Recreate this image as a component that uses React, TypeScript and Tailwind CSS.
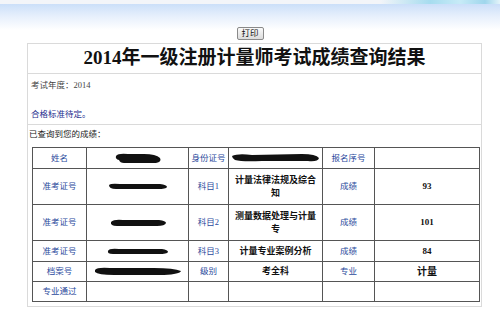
import React from "react";

type Blob = { w: number; h: number; d: string };

// 성적표의 가려진 칸 (검은 낙서)
const Redact = ({ w, h, d }: Blob) => (
  <svg width={w} height={h} viewBox={`0 0 ${w} ${h}`} className="mx-auto block">
    <path d={d} fill="#111" />
  </svg>
);

const blobs: Record<string, Blob> = {
  name: { w: 48, h: 11, d: "M2 3 Q4 0 14 1 L30 1 Q42 1 46 5 Q48 9 42 10 L10 10 Q6 10 5 7 Q1 6 2 3 Z" },
  id: { w: 88, h: 10, d: "M0 3 Q6 0 20 2 L70 1 Q84 1 87 5 Q86 9 76 8 L30 8 Q10 9 3 7 Q0 5 0 3 Z" },
  z1: { w: 60, h: 7, d: "M1 2 Q3 0 12 1 L52 1 Q59 2 59 4 Q58 6 50 6 L8 6 Q1 6 1 2 Z" },
  z2: { w: 58, h: 8, d: "M2 3 Q5 0 14 1 L50 1 Q57 2 57 4 Q56 7 48 7 L8 7 Q1 7 2 3 Z" },
  z3: { w: 62, h: 7, d: "M1 3 Q2 0 12 1 L55 1 Q61 2 61 4 Q60 6 52 6 L6 6 Q0 6 1 3 Z" },
  file: { w: 88, h: 9, d: "M1 3 Q3 0 16 1 L60 1 Q80 1 87 4 Q86 7 70 8 L20 8 Q4 8 1 5 Z" },
};

const Label = ({ children }: { children?: React.ReactNode }) => (
  <td className="border border-[#555] text-center align-middle text-[8.5px] text-[#2b4a9c]">{children}</td>
);

const Value = ({ children, big }: { children?: React.ReactNode; big?: boolean }) => (
  <td
    className={`border border-[#555] px-[3px] text-center align-middle font-bold text-[#111] ${
      big ? "text-[10px] leading-[13px]" : "text-[9px] leading-[13px]"
    }`}
  >
    {children}
  </td>
);

export default function App() {
  return (
    <div className="h-[310px] w-[500px] overflow-hidden bg-white font-['Liberation_Serif','Noto_Sans_CJK_SC',serif]">
      <div className="h-[4px] bg-[linear-gradient(to_right,#f3f5f9_0%,#f3f5f9_76%,#a6dcef_86%,#c7ebf7_92%,#9fd6ec_97%,#e4f4fa_100%)]" />
      <div className="bg-[linear-gradient(to_bottom,#cbdff9_0px,#e6effc_12px,#ffffff_26px)] pt-[23px]">
        <div className="flex justify-center">
          <button className="h-[13px] w-[27px] rounded-[2px] border border-[#8a8a8a] bg-[linear-gradient(to_bottom,#fafafa,#dcdcdc)] text-[8.5px] leading-[11px] text-[#111]">
            打印
          </button>
        </div>

        <div className="ml-[27px] mt-[3px] w-[455px] border border-[#dadada] bg-white pb-[4px]">
          <div className="flex h-[30px] items-center justify-center border-b border-[#dadada] text-[19px] font-bold text-[#111]">
            2014年一级注册计量师考试成绩查询结果
          </div>

          <div className="border-b border-[#dadada] pb-[4px] pl-[3px] pt-[5px] text-[8.5px] leading-[12px]">
            <div className="text-[#444]">考试年度：2014</div>
            <div className="mt-[17px] text-[#1f2f8f]">合格标准待定。</div>
          </div>

          <div className="pl-[1px] pt-[3px] text-[8.5px] leading-[12px] text-[#222]">已查询到您的成绩：</div>

          <table className="ml-[4px] mt-[7px] w-[447px] table-fixed border-collapse">
            <colgroup>
              <col className="w-[54px]" />
              <col className="w-[102px]" />
              <col className="w-[40px]" />
              <col className="w-[94px]" />
              <col className="w-[52px]" />
              <col className="w-[105px]" />
            </colgroup>
            <tbody>
              <tr className="h-[21px]">
                <Label>姓名</Label>
                <td className="border border-[#555]">
                  <Redact {...blobs.name} />
                </td>
                <Label>身份证号</Label>
                <td className="border border-[#555]">
                  <Redact {...blobs.id} />
                </td>
                <Label>报名序号</Label>
                <Value />
              </tr>
              <tr className="h-[36px]">
                <Label>准考证号</Label>
                <td className="border border-[#555]">
                  <Redact {...blobs.z1} />
                </td>
                <Label>科目1</Label>
                <Value>计量法律法规及综合知</Value>
                <Label>成绩</Label>
                <Value>93</Value>
              </tr>
              <tr className="h-[36px]">
                <Label>准考证号</Label>
                <td className="border border-[#555]">
                  <Redact {...blobs.z2} />
                </td>
                <Label>科目2</Label>
                <Value>测量数据处理与计量专</Value>
                <Label>成绩</Label>
                <Value>101</Value>
              </tr>
              <tr className="h-[21px]">
                <Label>准考证号</Label>
                <td className="border border-[#555]">
                  <Redact {...blobs.z3} />
                </td>
                <Label>科目3</Label>
                <Value>计量专业案例分析</Value>
                <Label>成绩</Label>
                <Value>84</Value>
              </tr>
              <tr className="h-[20px]">
                <Label>档案号</Label>
                <td className="border border-[#555]">
                  <Redact {...blobs.file} />
                </td>
                <Label>级别</Label>
                <Value>考全科</Value>
                <Label>专业</Label>
                <Value big>计量</Value>
              </tr>
              <tr className="h-[20px]">
                <Label>专业通过</Label>
                <td className="border border-[#555]" />
                <td className="border border-[#555]" />
                <td className="border border-[#555]" />
                <td className="border border-[#555]" />
                <td className="border border-[#555]" />
              </tr>
            </tbody>
          </table>
        </div>
      </div>
    </div>
  );
}
